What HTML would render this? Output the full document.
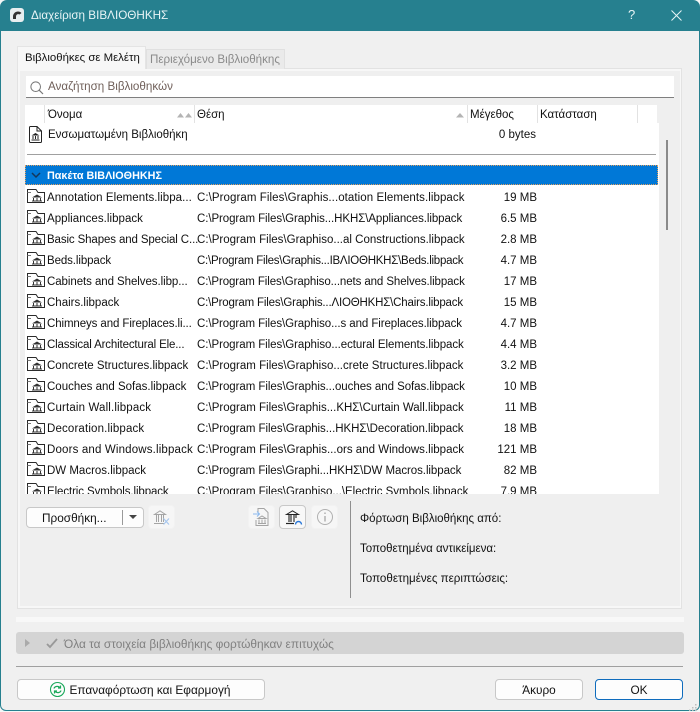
<!DOCTYPE html>
<html><head><meta charset="utf-8">
<style>
html,body{margin:0;padding:0;width:700px;height:712px;overflow:hidden;background:#f4f6f6}
*{box-sizing:border-box}
body{font-family:"Liberation Sans","DejaVu Sans",sans-serif;font-size:11.5px;color:#111;position:relative}
.a{position:absolute;white-space:nowrap}
#frame{position:absolute;left:0;top:0;width:700px;height:711px;background:#26808f;border-radius:7px 7px 6px 6px}
#win{position:absolute;left:1px;top:31px;width:698px;height:679px;background:#f0f0f0;border-radius:0 0 5px 5px}
.t{position:absolute;white-space:nowrap;line-height:14px;height:14px;margin-top:1px}
.btn{position:absolute;background:#fdfdfd;border:1px solid #c8c8c8;border-radius:4px;text-align:center;line-height:21px;font-size:11.8px}
.ib{position:absolute;width:27px;height:24px;border-radius:4px;background:#f6f6f6;border:1px solid #f2f2f2}
.sep{position:absolute;top:105px;width:1px;height:18px;background:#e2e2e2}
svg{position:absolute;overflow:visible}
</style></head><body>
<div id="frame"></div>
<div id="win"></div>
<!-- Title -->
<svg style="left:10px;top:8px" width="14" height="14" viewBox="0 0 14 14"><rect width="14" height="14" rx="3" fill="#e8eef0"/><path d="M3 11V8.500C3 5.500 5.500 3.500 8 3.500C9.500 3.500 10.500 4 11.500 5L9.500 6.500C8 5.500 6 6.500 6 8.500V11Z" fill="#333"/></svg>
<div class="a" style="left:31px;top:8px;color:#e8f4f6;font-size:11.7px;line-height:15px">Διαχείριση ΒΙΒΛΙΟΘΗΚΗΣ</div>
<div class="a" style="left:628px;top:7px;color:#e8f4f6;font-size:13px;line-height:16px">?</div>
<svg style="left:671px;top:10px" width="11" height="11" viewBox="0 0 11 11"><path d="M.5.5l10 10M10.500.5l-10 10" stroke="#e8f4f6" stroke-width="1" fill="none"/></svg>

<!-- Panel -->
<div class="a" style="left:17px;top:68px;width:665px;height:541px;background:#f7f7f7;border:1px solid #e2e2e2"></div>
<div class="a" style="left:20px;top:71px;width:660px;height:535px;background:#efefef"></div>
<div class="a" style="left:146px;top:49px;width:139px;height:20px;background:#eaeaea;border:1px solid #e0e0e0;border-bottom:0;color:#8a8a8a;padding:3px 3px;line-height:14px;font-size:11.6px">Περιεχόμενο Βιβλιοθήκης</div>
<div class="a" style="left:17px;top:46px;width:129px;height:23px;background:#f7f7f7;border:1px solid #e4e4e4;border-bottom:0;padding:4px 7px;line-height:14px;font-size:11.4px">Βιβλιοθήκες σε Μελέτη</div>

<!-- Search -->
<div class="a" style="left:26px;top:76px;width:648px;height:22px;background:#fff;border-bottom:1px solid #7f7f7f"></div>
<svg style="left:30px;top:81px" width="14" height="14" viewBox="0 0 14 14"><circle cx="5.700" cy="5.700" r="4.800" fill="none" stroke="#777" stroke-width="1"/><path d="M9.200 9.200L13 13" stroke="#777" stroke-width="1.200"/></svg>
<div class="t" style="left:48px;top:80px;margin:0;color:#70605a;font-size:11.65px">Αναζήτηση Βιβλιοθηκών</div>

<!-- Header -->
<div class="a" style="left:25px;top:105px;width:632px;height:18px;background:#fff"></div>
<div class="sep" style="left:44px"></div><div class="sep" style="left:194px"></div><div class="sep" style="left:467px"></div><div class="sep" style="left:537px"></div><div class="sep" style="left:637px"></div>
<div class="t" style="left:48px;top:107px">Όνομα</div>
<div class="t" style="left:197px;top:107px">Θέση</div>
<div class="t" style="left:470px;top:107px">Μέγεθος</div>
<div class="t" style="left:540px;top:107px">Κατάσταση</div>
<svg style="left:177px;top:113px" width="16" height="5"><path d="M0 4.500L3.500 0L7 4.500ZM8 4.500L11.500 0L15 4.500Z" fill="#b4b4b4"/></svg>
<svg style="left:456px;top:113px" width="9" height="5"><path d="M0 4.500L4 0L8 4.500Z" fill="#b4b4b4"/></svg>

<!-- List -->
<div class="a" style="left:25px;top:123px;width:634px;height:371px;background:#fff;overflow:hidden" id="list">
<svg style="left:4px;top:2.500px" width="13" height="18" viewBox="0 0 13 18"><path d="M.5 1.500Q.5.500 1.500.500H8L12.500 5V15.500Q12.500 16.500 11.500 16.500H1.500Q.5 16.500.5 15.500ZM8 .5V5H12.500" fill="#fff" stroke="#222"/><path d="M2.500 9.500L6.500 7L10.500 9.500Z" fill="#222"/><path d="M4 10V13M6.500 10V13M9 10V13M2.500 14H10.500" stroke="#222" fill="none"/></svg>
<div class="t" style="left:23px;top:4px">Ενσωματωμένη Βιβλιοθήκη</div>
<div class="t" style="right:123px;top:4px">0 bytes</div>
<div class="a" style="left:2px;top:31px;width:629px;height:1px;background:#a0a0a0"></div>
<div class="a" style="left:0;top:42px;width:633px;height:20px;background:#0078d7;outline:1px dotted #e0a060;outline-offset:-1px"></div>
<svg style="left:6px;top:49px" width="10" height="6"><path d="M1 1L5 5L9 1" stroke="#14365a" stroke-width="1.500" fill="none"/></svg>
<div class="t" style="left:22px;top:46px;margin:0;color:#fff;font-weight:bold;font-size:10.8px">Πακέτα ΒΙΒΛΙΟΘΗΚΗΣ</div>
<svg width="0" height="0"><defs><g id="f"><path d="M.5 13.500V.5H9L11 3.500H17.500V13.500Z" fill="#fff" stroke="#2a2a2a"/><path d="M.5 3.500H4" stroke="#777" fill="none"/><path d="M5 8.500L10 5.500L15 8.500Z" fill="#333"/><path d="M6.500 9V11.500M10 9V11.500M13.500 9V11.500M5 12H15" stroke="#333" fill="none"/></g></defs></svg>
<svg style="left:1.500px;top:66px" width="18" height="15"><use href="#f"/></svg>
<svg style="left:1.500px;top:87px" width="18" height="15"><use href="#f"/></svg>
<svg style="left:1.500px;top:108px" width="18" height="15"><use href="#f"/></svg>
<svg style="left:1.500px;top:129px" width="18" height="15"><use href="#f"/></svg>
<svg style="left:1.500px;top:150px" width="18" height="15"><use href="#f"/></svg>
<svg style="left:1.500px;top:171px" width="18" height="15"><use href="#f"/></svg>
<svg style="left:1.500px;top:192px" width="18" height="15"><use href="#f"/></svg>
<svg style="left:1.500px;top:213px" width="18" height="15"><use href="#f"/></svg>
<svg style="left:1.500px;top:234px" width="18" height="15"><use href="#f"/></svg>
<svg style="left:1.500px;top:255px" width="18" height="15"><use href="#f"/></svg>
<svg style="left:1.500px;top:276px" width="18" height="15"><use href="#f"/></svg>
<svg style="left:1.500px;top:297px" width="18" height="15"><use href="#f"/></svg>
<svg style="left:1.500px;top:318px" width="18" height="15"><use href="#f"/></svg>
<svg style="left:1.500px;top:339px" width="18" height="15"><use href="#f"/></svg>
<svg style="left:1.500px;top:360px" width="18" height="15"><use href="#f"/></svg>

<div class="t" style="left:22px;top:67px;letter-spacing:.06px">Annotation Elements.libpa...</div><div class="t" style="left:172px;top:67px;letter-spacing:.07px">C:\Program Files\Graphis...otation Elements.libpack</div><div class="t" style="right:122px;top:67px">19 MB</div>
<div class="t" style="left:22px;top:88px;letter-spacing:.04px">Appliances.libpack</div><div class="t" style="left:172px;top:88px;letter-spacing:-.08px">C:\Program Files\Graphis...ΗΚΗΣ\Appliances.libpack</div><div class="t" style="right:122px;top:88px">6.5 MB</div>
<div class="t" style="left:22px;top:109px;letter-spacing:-.12px">Basic Shapes and Special C...</div><div class="t" style="left:172px;top:109px;letter-spacing:.01px">C:\Program Files\Graphiso...al Constructions.libpack</div><div class="t" style="right:122px;top:109px">2.8 MB</div>
<div class="t" style="left:22px;top:130px;letter-spacing:-.1px">Beds.libpack</div><div class="t" style="left:172px;top:130px;letter-spacing:-.25px">C:\Program Files\Graphis...ΙΒΛΙΟΘΗΚΗΣ\Beds.libpack</div><div class="t" style="right:122px;top:130px">4.7 MB</div>
<div class="t" style="left:22px;top:151px;letter-spacing:-.07px">Cabinets and Shelves.libp...</div><div class="t" style="left:172px;top:151px;letter-spacing:-.1px">C:\Program Files\Graphiso...nets and Shelves.libpack</div><div class="t" style="right:122px;top:151px">17 MB</div>
<div class="t" style="left:22px;top:172px;letter-spacing:0">Chairs.libpack</div><div class="t" style="left:172px;top:172px;letter-spacing:-.18px">C:\Program Files\Graphis...ΛΙΟΘΗΚΗΣ\Chairs.libpack</div><div class="t" style="right:122px;top:172px">15 MB</div>
<div class="t" style="left:22px;top:193px;letter-spacing:-.1px">Chimneys and Fireplaces.li...</div><div class="t" style="left:172px;top:193px;letter-spacing:-.08px">C:\Program Files\Graphiso...s and Fireplaces.libpack</div><div class="t" style="right:122px;top:193px">4.7 MB</div>
<div class="t" style="left:22px;top:214px;letter-spacing:-.15px">Classical Architectural Ele...</div><div class="t" style="left:172px;top:214px;letter-spacing:-.07px">C:\Program Files\Graphiso...ectural Elements.libpack</div><div class="t" style="right:122px;top:214px">4.4 MB</div>
<div class="t" style="left:22px;top:235px;letter-spacing:0">Concrete Structures.libpack</div><div class="t" style="left:172px;top:235px;letter-spacing:.01px">C:\Program Files\Graphiso...crete Structures.libpack</div><div class="t" style="right:122px;top:235px">3.2 MB</div>
<div class="t" style="left:22px;top:256px;letter-spacing:0">Couches and Sofas.libpack</div><div class="t" style="left:172px;top:256px;letter-spacing:-.05px">C:\Program Files\Graphis...ouches and Sofas.libpack</div><div class="t" style="right:122px;top:256px">10 MB</div>
<div class="t" style="left:22px;top:277px;letter-spacing:.15px">Curtain Wall.libpack</div><div class="t" style="left:172px;top:277px;letter-spacing:0">C:\Program Files\Graphis...ΚΗΣ\Curtain Wall.libpack</div><div class="t" style="right:122px;top:277px">11 MB</div>
<div class="t" style="left:22px;top:298px;letter-spacing:.15px">Decoration.libpack</div><div class="t" style="left:172px;top:298px;letter-spacing:-.04px">C:\Program Files\Graphis...ΗΚΗΣ\Decoration.libpack</div><div class="t" style="right:122px;top:298px">18 MB</div>
<div class="t" style="left:22px;top:319px;letter-spacing:.16px">Doors and Windows.libpack</div><div class="t" style="left:172px;top:319px;letter-spacing:.01px">C:\Program Files\Graphis...ors and Windows.libpack</div><div class="t" style="right:122px;top:319px">121 MB</div>
<div class="t" style="left:22px;top:340px;letter-spacing:0">DW Macros.libpack</div><div class="t" style="left:172px;top:340px;letter-spacing:-.06px">C:\Program Files\Graphi...ΗΚΗΣ\DW Macros.libpack</div><div class="t" style="right:122px;top:340px">82 MB</div>
<div class="t" style="left:22px;top:361px;letter-spacing:-.1px">Electric Symbols.libpack</div><div class="t" style="left:172px;top:361px;letter-spacing:-.03px">C:\Program Files\Graphiso...\Electric Symbols.libpack</div><div class="t" style="right:122px;top:361px">7.9 MB</div>
</div>
<div class="a" style="left:666px;top:140px;width:2px;height:90px;background:#8a8a8a"></div>

<!-- Toolbar -->
<div class="btn" style="left:26px;top:507px;width:118px;height:21px;text-align:left;padding-left:15px;line-height:20px">Προσθήκη...</div>
<div class="a" style="left:122px;top:510px;width:1px;height:15px;background:#999"></div>
<svg style="left:129px;top:515px" width="8" height="4"><path d="M0 0H8L4 4Z" fill="#444"/></svg>
<div class="ib" style="left:148px;top:505px"></div>
<svg style="left:153px;top:510px" width="17" height="15" viewBox="0 0 17 15" fill="none" stroke="#a4a4a4"><path d="M1.500 4.500L7 .8L12.500 4.500Z"/><path d="M3.500 5V12M5.500 5V12M8.500 5V12M10.500 5V12M1 13.500H11.500"/><path d="M10.500 8.500L16 14.500M16 8.500L10.500 14.500" stroke="#a8c8ee" stroke-width="1.200"/></svg>
<div class="ib" style="left:248px;top:505px"></div>
<svg style="left:252px;top:508px" width="18" height="19" viewBox="0 0 18 19" fill="none" stroke="#a4a4a4"><path d="M6 4V.5H12L16 4.500V17.500H4V12"/><path d="M6 10.500L10 8L14 10.500Z"/><path d="M7 11.500V15M10 11.500V15M13 11.500V15M6 15.500H14"/><path d="M1 6H7M5 3.500L7.500 6L5 8.500" stroke="#8ab8ee"/></svg>
<div class="ib" style="left:279px;top:505px;background:#f8f8f8;border-color:#c8c8c8"></div>
<svg style="left:285px;top:510px" width="18" height="16" viewBox="0 0 18 16" fill="none" stroke="#222"><path d="M1.500 4.500L7.500 .8L13.500 4.500Z"/><path d="M4 5V12M6 5V12M9 5V12M11 5V8" stroke-width="1.100"/><path d="M1 13.500H9" stroke-width="1.200"/><path d="M10.500 14.500A3 3 0 0 1 16.500 14.500" stroke="#2a78d8" stroke-width="1.400"/></svg>
<div class="ib" style="left:311px;top:505px"></div>
<svg style="left:317px;top:509px" width="16" height="16" viewBox="0 0 16 16" fill="none" stroke="#b0b0b0"><circle cx="8" cy="8" r="7.500"/><path d="M8 7V12.500M8 3.500V5" stroke-width="1.500"/></svg>
<div class="a" style="left:350px;top:501px;width:1px;height:97px;background:#8f8f8f"></div>
<div class="t" style="left:360px;top:511px">Φόρτωση Βιβλιοθήκης από:</div>
<div class="t" style="left:360px;top:541px">Τοποθετημένα αντικείμενα:</div>
<div class="t" style="left:360px;top:571px;font-size:11.6px">Τοποθετημένες περιπτώσεις:</div>

<!-- Bottom -->
<div class="a" style="left:16px;top:617px;width:668px;height:5px;background:#f8f8f8"></div>
<div class="a" style="left:16px;top:632px;width:668px;height:22px;background:#d4d4d4;border-radius:3px"></div>
<svg style="left:25px;top:639px" width="6" height="8"><path d="M0 0L5 4L0 8Z" fill="#aaa"/></svg>
<svg style="left:46px;top:638px" width="12" height="11"><path d="M1 6L4 9L11 1" stroke="#999" stroke-width="1.800" fill="none"/></svg>
<div class="t" style="left:64px;top:637px;margin:0;color:#808080;font-size:11.9px">Όλα τα στοιχεία βιβλιοθήκης φορτώθηκαν επιτυχώς</div>
<div class="a" style="left:16px;top:666px;width:667px;height:1px;background:#a0a0a0"></div>
<div class="btn" style="left:17px;top:679px;width:248px;height:21px;padding-left:18px;font-size:11.85px">Επαναφόρτωση και Εφαρμογή</div>
<svg style="left:50px;top:682px" width="15" height="15" viewBox="0 0 15 15" fill="none" stroke="#1aa85a"><circle cx="7.500" cy="7.500" r="7" stroke-width="1.100"/><path d="M4 6.500C4.500 4.500 7.500 3.500 10 5.500M10.500 3.500V6H8M11 8.500C10.500 10.500 7.500 11.500 5 9.500M4.500 11.500V9H7" stroke-width="1.200"/></svg>
<div class="btn" style="left:495px;top:679px;width:88px;height:21px">Άκυρο</div>
<div class="btn" style="left:595px;top:679px;width:88px;height:21px;border-color:#0f6cbd">OK</div>
<svg style="left:688px;top:703px" width="10" height="7"><path d="M7 1h1.500v1.500H7ZM4 4h1.500v1.500H4ZM7 4h1.500v1.500H7ZM1 6.500h1.500V8H1ZM4 6.500h1.500V8H4ZM7 6.500h1.500V8H7Z" fill="#bdbdbd"/></svg>
</body></html>
